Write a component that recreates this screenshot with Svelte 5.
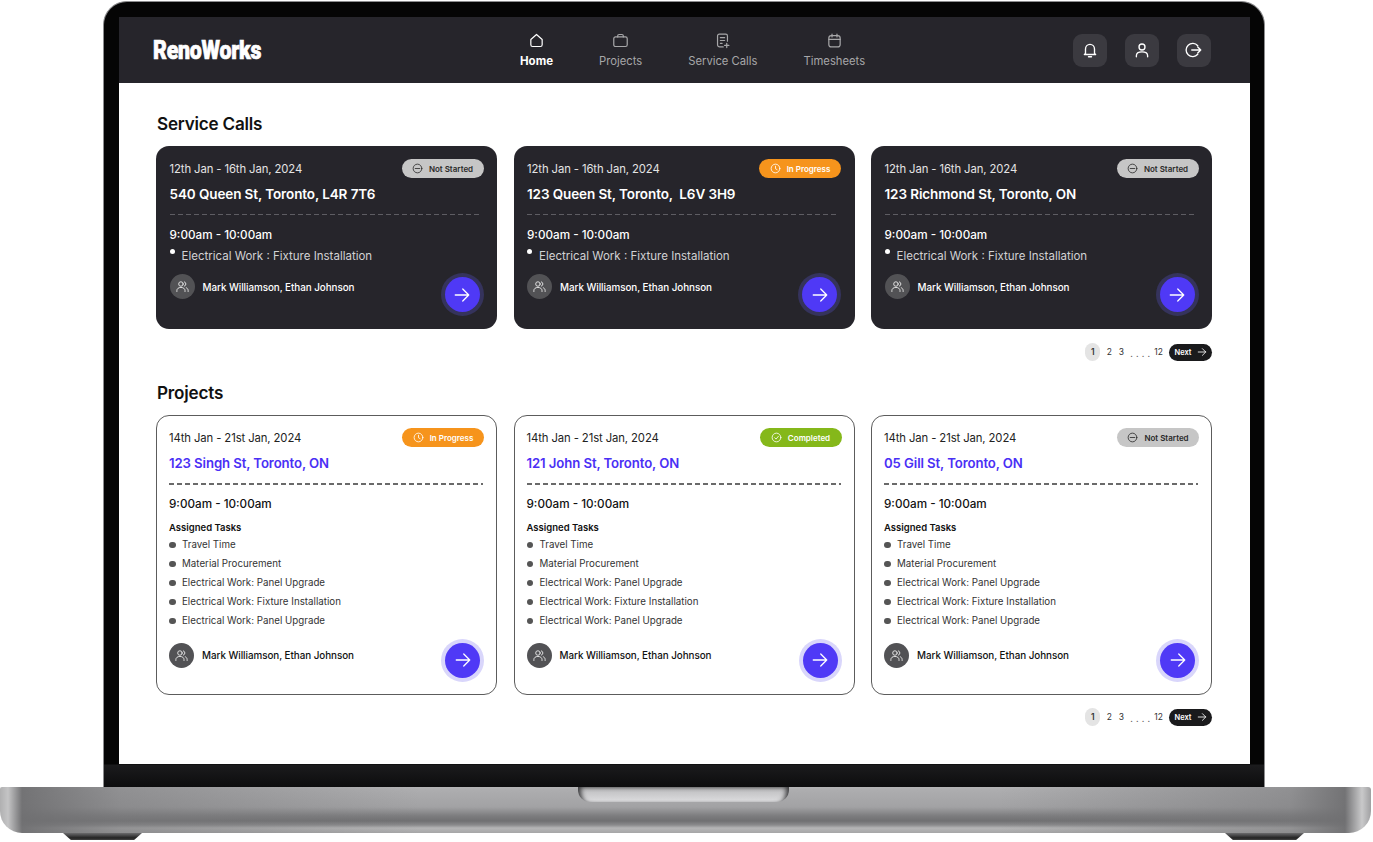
<script>
  const tabs = [
    { label: 'Home', icon: 'home', active: true },
    { label: 'Projects', icon: 'brief' },
    { label: 'Service Calls', icon: 'receipt' },
    { label: 'Timesheets', icon: 'cal' }
  ];
  const calls = [
    { address: '540 Queen St, Toronto, L4R 7T6', status: 'ns' },
    { address: '123 Queen St, Toronto,  L6V 3H9', status: 'ip' },
    { address: '123 Richmond St, Toronto, ON', status: 'ns' }
  ];
  const projects = [
    { address: '123 Singh St, Toronto, ON', status: 'ip' },
    { address: '121 John St, Toronto, ON', status: 'done' },
    { address: '05 Gill St, Toronto, ON', status: 'ns' }
  ];
  const tasks = ['Travel Time', 'Material Procurement', 'Electrical Work: Panel Upgrade', 'Electrical Work: Fixture Installation', 'Electrical Work: Panel Upgrade'];
  const labels = { ns: 'Not Started', ip: 'In Progress', done: 'Completed' };
</script>

{#snippet badge(status)}
  <span class="badge {status}">
    <svg viewBox="0 0 24 24" class="bicon">
      <circle cx="12" cy="12" r="9.5" />
      {#if status === 'ns'}<path d="M7 12h10" />{/if}
      {#if status === 'ip'}<path d="M12 7v5.5l3.5 2" />{/if}
      {#if status === 'done'}<path d="M8 12.5l3 3 5-6" />{/if}
    </svg>
    {labels[status]}
  </span>
{/snippet}

{#snippet footer()}
  <div class="foot">
    <div class="people">
      <span class="avatar">
        <svg viewBox="0 0 24 24"><circle cx="9.5" cy="8" r="3.6" /><path d="M3 20v-1.5c0-3 2.6-5 6.500-5s6.500 2 6.500 5V20" /><path d="M15 4.600a3.600 3.600 0 0 1 0 6.800" /><path d="M18 14c1.900.700 3 2.300 3 4.500V20" /></svg>
      </span>
      <span class="names">Mark Williamson, Ethan Johnson</span>
    </div>
    <button class="go" aria-label="Open">
      <svg viewBox="0 0 24 24"><path d="M3 12h18M13 4l8 8-8 8" /></svg>
    </button>
  </div>
{/snippet}

{#snippet pager()}
  <div class="pager">
    <span class="pg cur">1</span>
    <span class="pg">2</span>
    <span class="pg">3</span>
    <span class="pg dots">. . . .</span>
    <span class="pg">12</span>
    <span class="next">Next
      <svg viewBox="0 0 24 24"><path d="M3 12h18M13 4l8 8-8 8" /></svg>
    </span>
  </div>
{/snippet}

<div class="page">
  <div class="lid">
    <div class="screen">
      <header class="top">
        <div class="logo">RenoWorks</div>
        <nav class="tabs">
          {#each tabs as t}
            <div class="tab" class:active={t.active}>
              <svg viewBox="0 0 24 24">
                {#if t.icon === 'home'}<path d="M4 10.500 12 3.500l8 7V18a2.500 2.500 0 0 1-2.500 2.500h-11A2.500 2.500 0 0 1 4 18z" />{/if}
                {#if t.icon === 'brief'}<rect x="2.500" y="7" width="19" height="13.500" rx="2.500" /><path d="M8 7V5.500A2 2 0 0 1 10 3.500h4a2 2 0 0 1 2 2V7" />{/if}
                {#if t.icon === 'receipt'}<path d="M13 21H8a3 3 0 0 1-3-3V5.500A2.500 2.500 0 0 1 7.500 3h9A2.500 2.500 0 0 1 19 5.500V13" /><path d="M9 8h6M9 12h6M9 16h2.500M18 16v6M15 19h6" />{/if}
                {#if t.icon === 'cal'}<rect x="4" y="5" width="16" height="16" rx="3.500" /><path d="M4 10.500h16M8.500 3v4M15.500 3v4" />{/if}
              </svg>
              <span>{t.label}</span>
            </div>
          {/each}
        </nav>
        <div class="actions">
          <span class="act"><svg viewBox="0 0 24 24"><path d="M6 16.500V10.500a6 6 0 0 1 12 0v6l1.500 1.500h-15z" /><path d="M10 21h4" /></svg></span>
          <span class="act"><svg viewBox="0 0 24 24"><circle cx="12" cy="8" r="4" /><path d="M4.500 21v-1.500c0-3 3-5 7.500-5s7.500 2 7.500 5V21" /></svg></span>
          <span class="act"><svg viewBox="0 0 24 24"><path d="M17 6.300A8.800 8.800 0 1 0 17 17.700" /><path d="M9 12h12M17 8l4 4-4 4" /></svg></span>
        </div>
      </header>

      <main class="body">
        <h2 class="h-service">Service Calls</h2>
        <div class="grid">
          {#each calls as c}
            <article class="card dark">
              <div class="row">
                <span class="date">12th Jan - 16th Jan, 2024</span>
                {@render badge(c.status)}
              </div>
              <div class="addr">{c.address}</div>
              <div class="dash"></div>
              <div class="time">9:00am - 10:00am</div>
              <div class="work"><i></i>Electrical Work : Fixture Installation</div>
              {@render footer()}
            </article>
          {/each}
        </div>
        {@render pager()}

        <h2 class="h-proj">Projects</h2>
        <div class="grid">
          {#each projects as p}
            <article class="card light">
              <div class="row">
                <span class="date">14th Jan - 21st Jan, 2024</span>
                {@render badge(p.status)}
              </div>
              <div class="addr">{p.address}</div>
              <div class="dash"></div>
              <div class="time">9:00am - 10:00am</div>
              <div class="assigned">Assigned Tasks</div>
              <ul>
                {#each tasks as t}<li>{t}</li>{/each}
              </ul>
              {@render footer()}
            </article>
          {/each}
        </div>
        {@render pager()}
      </main>
    </div>
  </div>
  <div class="base">
    <div class="notch"></div>
  </div>
  <div class="feet"><span></span><span></span></div>
</div>

<style>
  :global(body) { margin: 0; background: #fff; }
  .page {
    width: 1373px; height: 842px; overflow: hidden; background: #fff;
    padding-top: 1px; box-sizing: border-box;
    font-family: Inter, "Noto Sans", sans-serif; color: #111;
  }
  .lid {
    margin-left: 103px; width: 1162px; height: 786px; box-sizing: border-box;
    padding: 15px 15px 0 15px; background: #050505;
    border: 1px solid #8d8d8f; border-bottom: 0; border-radius: 24px 24px 0 0;
    background-image: linear-gradient(to bottom, #050505 0, #050505 762px, #1b1b1d 763px, #0c0c0d 786px);
  }
  .screen { width: 1131px; height: 747px; background: #fff; display: flex; flex-direction: column; }
  .top { height: 66px; flex: none; background: #26252b; display: flex; align-items: center; padding: 0 39px 0 34px; }
  .logo {
    width: 110px; font-family: "Roboto", "Liberation Sans", sans-serif; font-weight: 900; font-size: 26px; color: #fff;
    white-space: nowrap; transform: scaleX(.82); transform-origin: left center; letter-spacing: -.3px;
    -webkit-text-stroke: .7px #fff;
  }
  .tabs { display: flex; gap: 46px; margin-left: 257px; }
  .tab { display: flex; flex-direction: column; align-items: center; gap: 5px; color: #a7a7a9; font-size: 11.250px; line-height: 14px; }
  .tab svg { width: 17px; height: 17px; fill: none; stroke: currentColor; stroke-width: 1.700; stroke-linejoin: round; stroke-linecap: round; }
  .tab.active { color: #fff; font-weight: 700; font-size: 11.500px; }
  .actions { margin-left: auto; display: flex; gap: 18px; }
  .act { width: 34px; height: 33px; border-radius: 9px; background: #3b3a40; display: flex; align-items: center; justify-content: center; }
  .act svg { width: 18px; height: 18px; fill: none; stroke: #fff; stroke-width: 1.800; stroke-linejoin: round; stroke-linecap: round; }

  .body { padding: 0 38px 0 37px; }
  h2 { margin: 0 0 0 1px; font-size: 17.100px; font-weight: 600; line-height: 22px; letter-spacing: -.2px; color: #111; }
  .h-service { padding-top: 30px; padding-bottom: 11px; }
  .h-proj { padding-top: 21px; padding-bottom: 11px; }
  .grid { display: grid; grid-template-columns: repeat(3, 341px); gap: 16.500px; }
  .card { box-sizing: border-box; border-radius: 13px; padding: 13px 13.500px 0 13.500px; display: flex; flex-direction: column; }
  .dark { height: 183px; background: #26252b; color: #fff; }
  .light { height: 280px; background: #fff; border: 1.500px solid #5c5c5c; color: #111; padding: 12px 12px 0 12px; }
  .row { display: flex; justify-content: space-between; align-items: center; height: 19px; }
  .date { font-size: 11.300px; letter-spacing: -.1px; }
  .dark .date { color: #e4e4e4; }
  .light .date { color: #222; }
  .badge { width: 82px; height: 19px; box-sizing: border-box; border-radius: 10px; display: flex; align-items: center; justify-content: center; gap: 6px; font-size: 8px; font-weight: 600; white-space: nowrap; }
  .bicon { width: 11px; height: 11px; fill: none; stroke: currentColor; stroke-width: 1.800; stroke-linecap: round; stroke-linejoin: round; }
  .ns { background: #c6c6c6; color: #2a2a2a; }
  .ip { background: #f6941c; color: #fff; }
  .done { background: #85b81a; color: #fff; }
  .addr { margin-top: 7px; margin-bottom: 1px; font-size: 13.500px; font-weight: 600; line-height: 18px; white-space: pre; letter-spacing: -.1px; }
  .light .addr { color: #4a2ff5; font-size: 13.200px; }
  .dash { margin-top: 10px; margin-right: 2px; height: 1px; background: repeating-linear-gradient(to right, #5e5d63 0, #5e5d63 5px, transparent 5px, transparent 8px); }
  .light .dash { height: 1.500px; margin-right: 1px; background: repeating-linear-gradient(to right, #6a6a6a 0, #6a6a6a 5px, transparent 5px, transparent 8px); }
  .time { margin-top: 12px; font-size: 11.700px; font-weight: 500; line-height: 16px; }
  .light .time { margin-top: 11px; }
  .work { margin-top: 5px; font-size: 11.500px; line-height: 16px; color: #d2d2d4; display: flex; position: relative; padding-left: 12px; }
  .work i { position: absolute; left: 0; top: 1px; width: 5px; height: 5px; border-radius: 50%; background: #fff; }
  .assigned { margin-top: 9px; font-size: 9.500px; font-weight: 600; line-height: 14px; }
  ul { list-style: none; margin: 0; padding: 0; }
  li { height: 19px; line-height: 19px; font-size: 9.750px; color: #333; padding-left: 13px; position: relative; }
  li::before { content: ''; position: absolute; left: 0; top: 7px; width: 6.500px; height: 6.500px; border-radius: 50%; background: #555; }
  .foot { display: flex; justify-content: space-between; align-items: flex-start; margin-top: 10px; }
  .light .foot { margin-top: 13px; }
  .people { display: flex; align-items: center; gap: 8px; height: 25px; }
  .avatar { width: 25px; height: 25px; border-radius: 50%; background: #525255; display: flex; align-items: center; justify-content: center; }
  .avatar svg { width: 15px; height: 15px; fill: none; stroke: #e8e8e8; stroke-width: 1.500; stroke-linecap: round; }
  .names { font-size: 9.850px; font-weight: 500; color: #fff; letter-spacing: -.05px; }
  .light .names { color: #111; }
  .go { width: 35px; height: 35px; margin: 3px 4px 0 0; padding: 0; border: 0; border-radius: 50%; background: #4f39f6; box-shadow: 0 0 0 4px #35335c; display: flex; align-items: center; justify-content: center; }
  .light .go { box-shadow: 0 0 0 4px #d9d6fb; margin-top: 0; }
  .go svg { width: 18px; height: 18px; fill: none; stroke: #fff; stroke-width: 1.700; stroke-linecap: round; stroke-linejoin: round; }
  .pager { display: flex; justify-content: flex-end; align-items: center; height: 18px; margin-top: 14px; font-size: 8.500px; color: #333; gap: 6px; }
  .pager:last-child { margin-top: 13px; }
  .pg { min-width: 6px; text-align: center; }
  .pg.cur { width: 15px; height: 18px; line-height: 18px; background: #e4e4e4; border-radius: 9px; font-weight: 600; }
  .dots { width: 18px; font-size: 9px; letter-spacing: .3px; color: #666; margin-top: 3px; white-space: nowrap; }
  .next { width: 43px; height: 17px; box-sizing: border-box; background: #1a1a1c; color: #fff; border-radius: 9px; display: flex; align-items: center; justify-content: center; gap: 5px; font-size: 7.500px; font-weight: 600; }
  .next svg { width: 10px; height: 10px; fill: none; stroke: #fff; stroke-width: 2; stroke-linecap: round; stroke-linejoin: round; }

  .base {
    position: relative; width: 1371px; height: 46px; box-sizing: border-box;
    border-radius: 2px 3px 22px 22px;
    background:
      linear-gradient(to right, #b0b0b1 0, #c4c4c5 8px, rgba(112,112,114,.95) 22px, rgba(120,120,122,.55) 120px, rgba(120,120,122,0) 420px, rgba(120,120,122,0) 1000px, rgba(120,120,122,.55) 1290px, rgba(112,112,114,.95) 1345px, #c9c9ca 1362px, #a0a0a2 1371px),
      linear-gradient(to bottom, #b4b4b6 0, #adadaf 3px, #a2a2a4 20px, #7c7c7e 29px, #707072 34px, #8a8a8c 38px, #b5b5b6 41px, #a6a6a7 46px);
  }
  .notch {
    position: absolute; left: 578px; top: 0; width: 211px; height: 15px; box-sizing: border-box;
    background: linear-gradient(to bottom, #b9b9bb, #d8d8da 85%, #c6c6c8);
    border-radius: 0 0 12px 12px;
    box-shadow: inset 6px 2px 5px -3px #3a3a3c, inset -6px 2px 5px -3px #3a3a3c;
  }
  .feet { display: flex; justify-content: space-between; padding: 0 69px 0 63px; height: 7px; }
  .feet span { width: 79px; height: 7px; background: linear-gradient(to bottom, #6b6b6d, #222 70%, #444); clip-path: polygon(0 0, 100% 0, 90% 100%, 10% 100%); }
</style>
